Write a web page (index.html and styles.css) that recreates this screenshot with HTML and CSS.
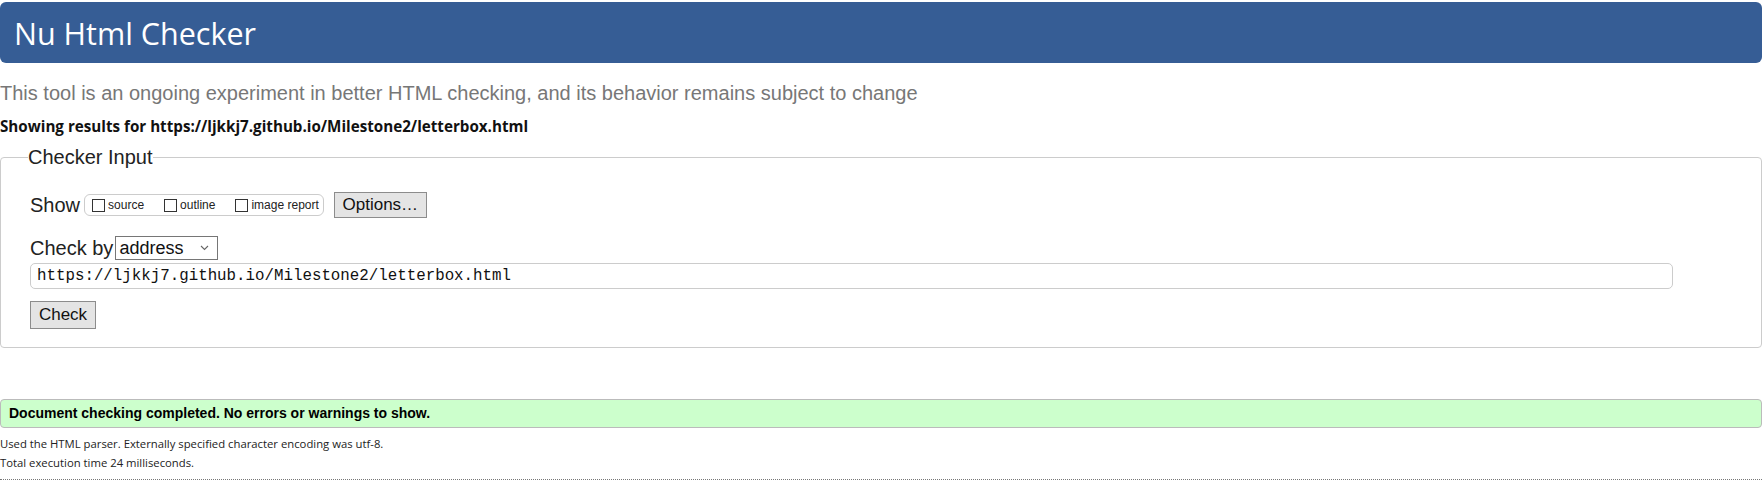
FILE: index.html
```html
<!DOCTYPE html>
<html lang="en">
<head>
<meta charset="utf-8">
<title>Nu Html Checker</title>
<link rel="stylesheet" href="styles.css">
</head>
<body>
<header class="masthead">
  <h1 class="masthead-title">Nu Html Checker</h1>
</header>
<p class="tagline">This tool is an ongoing experiment in better HTML checking, and its behavior remains subject to change</p>
<p class="showing">Showing results for https://ljkkj7.github.io/Milestone2/letterbox.html</p>
<form class="checker-form">
  <fieldset class="checker-input">
    <legend class="checker-legend">Checker Input</legend>
    <div class="show-row">
      <span class="row-label">Show</span>
      <fieldset class="show-opts">
        <label class="opt"><input type="checkbox" class="cb">source</label>
        <label class="opt"><input type="checkbox" class="cb">outline</label>
        <label class="opt"><input type="checkbox" class="cb">image report</label>
      </fieldset>
      <button type="button" class="btn btn-options">Options…</button>
    </div>
    <div class="checkby-row">
      <label class="row-label">Check by</label>
      <span class="select-wrap">
        <select class="select">
          <option>address</option>
        </select>
        <svg class="chev" width="9" height="6" viewBox="0 0 9 6"><path d="M1 1l3.5 3.5L8 1" fill="none" stroke="#666" stroke-width="1.1"/></svg>
      </span>
    </div>
    <input class="url" type="text" value="https://ljkkj7.github.io/Milestone2/letterbox.html">
    <div class="check-row">
      <button type="button" class="btn btn-check">Check</button>
    </div>
  </fieldset>
</form>
<div class="success">Document checking completed. No errors or warnings to show.</div>
<p class="details">Used the HTML parser. Externally specified character encoding was utf-8.</p>
<p class="details">Total execution time 24 milliseconds.</p>
<div class="footer-rule"></div>
</body>
</html>
```
FILE: styles.css
```css
html, body {
  margin: 0;
  padding: 0;
  background: #fff;
}
body {
  font-family: "Liberation Sans", Arial, sans-serif;
  color: #111;
  width: 1762px;
  overflow: hidden;
}
.masthead {
  margin-top: 2px;
  height: 61px;
  background: #365d95;
  border-radius: 6px;
  display: flex;
  align-items: center;
}
.masthead-title {
  margin: 0 0 0 14px;
  font-family: "Open Sans", sans-serif;
  font-weight: 400;
  font-size: 30.5px;
  line-height: 40px;
  color: #fff;
}
.tagline {
  margin: 19px 0 0 0;
  font-size: 20px;
  line-height: 23px;
  color: #777;
}
.showing {
  margin: 11px 0 0 0;
  font-family: "Open Sans", sans-serif;
  font-weight: 700;
  font-size: 15.2px;
  line-height: 20px;
  color: #111;
}
.checker-form {
  margin: 10px 0 0 0;
}
.checker-input {
  margin: 0;
  padding: 24px 20px 18px 29px;
  border: 1px solid #ccc;
  border-radius: 4px;
  min-width: 0;
}
.checker-legend {
  padding: 0;
  margin-left: -2px;
  font-size: 20px;
  line-height: 22px;
  color: #222;
}
.show-row {
  display: flex;
  align-items: center;
  height: 26px;
}
.row-label {
  font-size: 20px;
  color: #222;
  line-height: 24px;
}
.show-opts {
  margin: 0 0 0 4px;
  padding: 0 4px 0 7px;
  height: 22px;
  border: 1px solid #ccc;
  border-radius: 6px;
  display: flex;
  align-items: center;
  min-width: 0;
  box-sizing: border-box;
}
.opt {
  display: flex;
  align-items: center;
  font-size: 12px;
  color: #222;
  margin-right: 20px;
}
.opt:last-child {
  margin-right: 0;
}
.cb {
  appearance: none;
  -webkit-appearance: none;
  width: 13px;
  height: 13px;
  margin: 0 3px 0 0;
  border: 1px solid #333;
  background: #fff;
  box-sizing: border-box;
}
.btn {
  font-family: "Liberation Sans", Arial, sans-serif;
  font-size: 17px;
  color: #111;
  background: #e4e4e4;
  border: 1px solid #8c8c8c;
  border-radius: 0;
  padding: 0 7px;
  box-sizing: border-box;
}
.btn-options {
  margin-left: 10px;
  height: 26px;
  width: 93px;
}
.checkby-row {
  margin-top: 18px;
  display: flex;
  align-items: center;
  height: 24px;
}
.select-wrap {
  position: relative;
  margin-left: 2px;
  display: inline-block;
  height: 24px;
}
.select {
  appearance: none;
  -webkit-appearance: none;
  width: 103px;
  height: 24px;
  border: 1px solid #767676;
  border-radius: 0;
  background: #fff;
  font-family: "Liberation Sans", Arial, sans-serif;
  font-size: 18px;
  color: #111;
  padding: 0 0 0 3px;
  box-sizing: border-box;
}
.chev {
  position: absolute;
  right: 9px;
  top: 9px;
  pointer-events: none;
}
.url {
  display: block;
  margin-top: 3px;
  width: 1643px;
  height: 26px;
  box-sizing: border-box;
  border: 1px solid #ccc;
  border-radius: 5px;
  padding: 0 6px;
  font-family: "Liberation Mono", monospace;
  font-size: 15.8px;
  color: #111;
  background: #fff;
}
.check-row {
  margin-top: 12px;
  display: flex;
}
.btn-check {
  height: 28px;
  width: 66px;
}
.success {
  margin-top: 51px;
  height: 29px;
  box-sizing: border-box;
  border: 1px solid #bbb;
  border-radius: 4px;
  background: #ccffcc;
  padding: 0 0 0 8px;
  font-weight: 700;
  font-size: 14px;
  line-height: 27px;
  color: #000;
}
.details {
  margin: 0;
  font-family: "Open Sans", sans-serif;
  font-size: 11.3px;
  line-height: 19px;
  color: #222;
}
.success + .details {
  margin-top: 6px;
}
.footer-rule {
  margin-top: 7px;
  border-top: 1px dotted #777;
}
```
